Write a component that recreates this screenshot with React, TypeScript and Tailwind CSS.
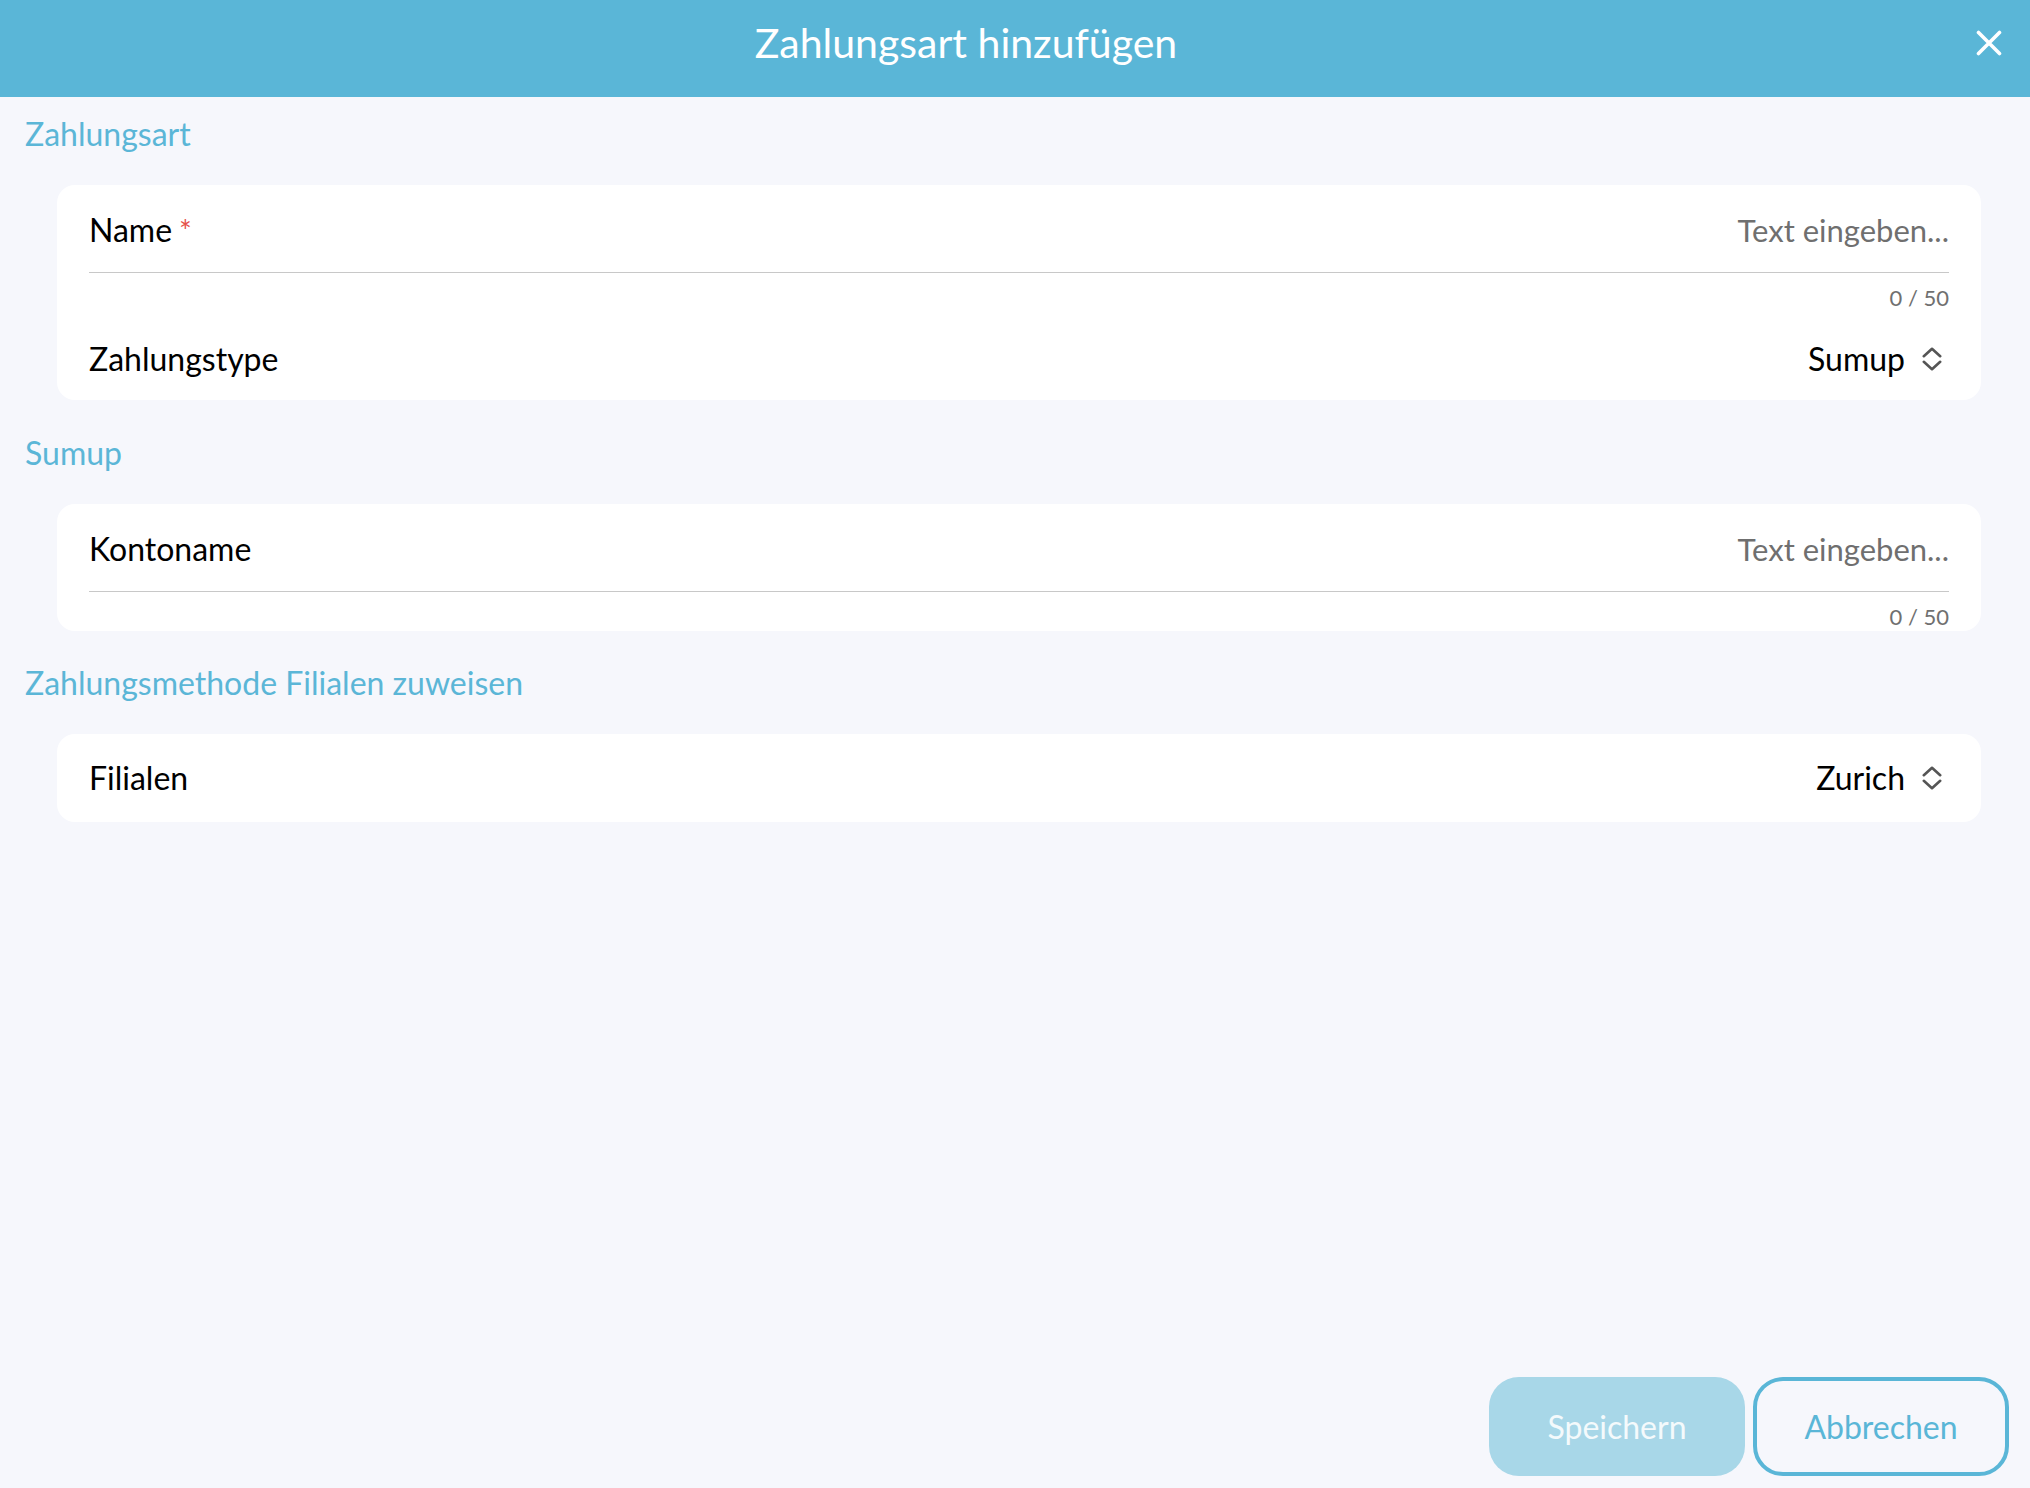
import React from 'react'

function ChevronsIcon() {
  return (
    <svg width="20" height="24" viewBox="0 0 20 24" fill="none" className="mr-[7px] shrink-0">
      <path d="M1.8 9.2 L10 1.8 L18.2 9.2" stroke="#555" strokeWidth="2.6" strokeLinecap="round" strokeLinejoin="round" />
      <path d="M1.8 14.8 L10 22.2 L18.2 14.8" stroke="#555" strokeWidth="2.6" strokeLinecap="round" strokeLinejoin="round" />
    </svg>
  )
}

function SectionLabel({ children }: { children: React.ReactNode }) {
  return <div className="pl-[25px] text-[32px] leading-[36px] text-[#5bb6d7]">{children}</div>
}

function TextField({ label, required }: { label: string; required?: boolean }) {
  return (
    <div>
      <div className="flex items-center justify-between border-b border-[#c8c8c8] pb-[24px]">
        <span className="text-[32px] leading-[36px] text-black">
          {label}
          {required && <span className="ml-[7px] text-[30px] text-[#e5534b]">*</span>}
        </span>
        <span className="text-[31px] leading-[36px] text-[#6f6f6f]">Text eingeben...</span>
      </div>
      <div className="mt-[13px] text-right text-[22px] leading-[24px] text-[#707070]">0 / 50</div>
    </div>
  )
}

function SelectRow({ label, value }: { label: string; value: string }) {
  return (
    <div className="flex items-center justify-between">
      <span className="text-[32px] leading-[36px] text-black">{label}</span>
      <span className="flex items-center gap-[17px] text-[32px] leading-[36px] text-black">
        {value}
        <ChevronsIcon />
      </span>
    </div>
  )
}

export default function App() {
  return (
    <div
      className="flex h-[1488px] flex-col bg-[#f6f7fc]"
      style={{ fontFamily: 'Lato, "Liberation Sans", sans-serif' }}
    >
      <header className="flex h-[97px] items-center bg-[#5ab6d7] pb-[12px]">
        <h1 className="flex-1 text-center text-[41px] font-normal leading-[48px] text-white">
          Zahlungsart hinzufügen
        </h1>
        <button className="flex w-[98px] items-center pl-[44px]">
          <svg width="26" height="26" viewBox="0 0 26 26" fill="none">
            <path d="M2.5 2.5 L23.5 23.5 M23.5 2.5 L2.5 23.5" stroke="white" strokeWidth="3.6" strokeLinecap="round" />
          </svg>
        </button>
      </header>

      <main className="flex flex-col">
        <div className="mt-[19px]">
          <SectionLabel>Zahlungsart</SectionLabel>
        </div>
        <div className="ml-[57px] mr-[49px] mt-[33px] rounded-[18px] bg-white px-[32px] pb-[23px] pt-[27px]">
          <TextField label="Name" required />
          <div className="mt-[31px]">
            <SelectRow label="Zahlungstype" value="Sumup" />
          </div>
        </div>

        <div className="mt-[35px]">
          <SectionLabel>Sumup</SectionLabel>
        </div>
        <div className="ml-[57px] mr-[49px] mt-[33px] rounded-[18px] bg-white px-[32px] pb-[2px] pt-[27px]">
          <TextField label="Kontoname" />
        </div>

        <div className="mt-[34px]">
          <SectionLabel>Zahlungsmethode Filialen zuweisen</SectionLabel>
        </div>
        <div className="ml-[57px] mr-[49px] mt-[33px] rounded-[18px] bg-white px-[32px] py-[26px]">
          <SelectRow label="Filialen" value="Zurich" />
        </div>
      </main>

      <footer className="mt-auto flex justify-end gap-[8px] pb-[12px] pr-[21px]">
        <button className="h-[99px] w-[256px] rounded-[30px] bg-[#a8d7e8] text-[32px] text-[#f4fafc]">
          Speichern
        </button>
        <button className="h-[99px] w-[256px] rounded-[30px] border-[4px] border-[#5ab6d7] text-[32px] text-[#5ab6d7]">
          Abbrechen
        </button>
      </footer>
    </div>
  )
}
